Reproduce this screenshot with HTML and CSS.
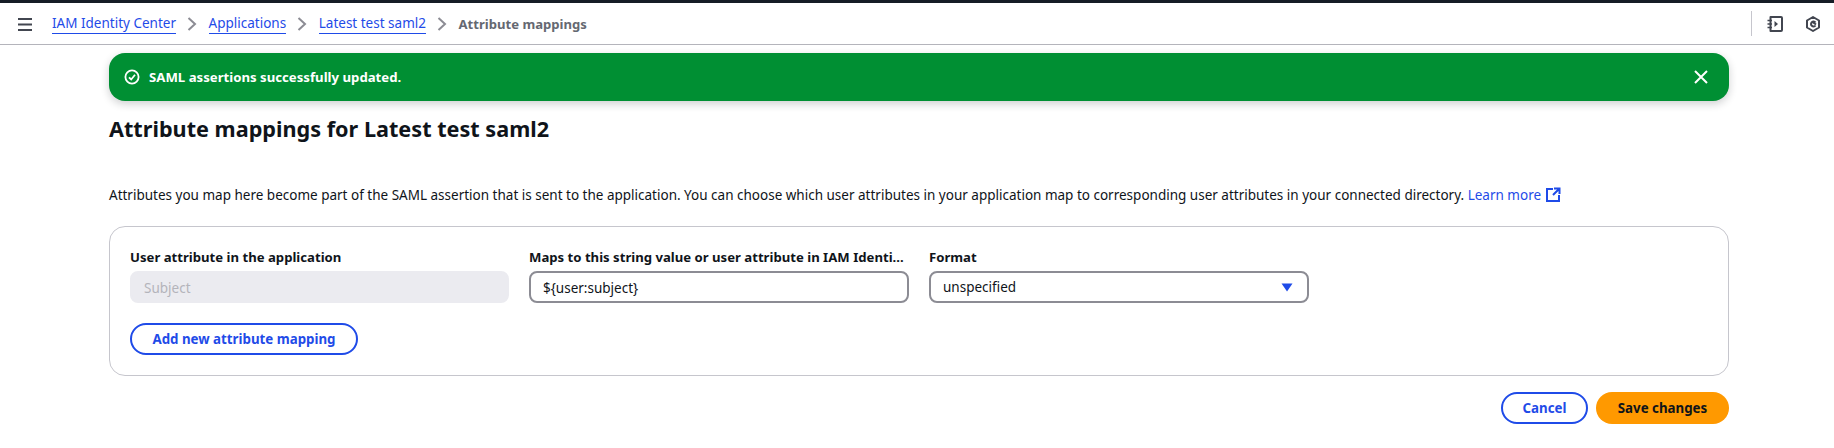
FILE: index.html
```html
<!DOCTYPE html>
<html lang="en">
<head>
<meta charset="utf-8">
<title>Attribute mappings</title>
<link rel="stylesheet" href="styles.css">
</head>
<body>
<header class="topbar">
  <div class="topbar-left">
    <svg class="menu-icon" width="16" height="16" viewBox="0 0 16 16"><path d="M1 3h14M1 8.500h14M1 14h14" fill="none" stroke="#424650" stroke-width="2"/></svg>
    <nav class="crumbs">
      <a class="crumb-link">IAM Identity Center</a>
      <svg class="chev" width="16" height="16" viewBox="0 0 16 16"><path d="M4.500 2l6.500 6-6.500 6" fill="none" stroke="#8c8c94" stroke-width="2"/></svg>
      <a class="crumb-link">Applications</a>
      <svg class="chev" width="16" height="16" viewBox="0 0 16 16"><path d="M4.500 2l6.500 6-6.500 6" fill="none" stroke="#8c8c94" stroke-width="2"/></svg>
      <a class="crumb-link">Latest test saml2</a>
      <svg class="chev" width="16" height="16" viewBox="0 0 16 16"><path d="M4.500 2l6.500 6-6.500 6" fill="none" stroke="#8c8c94" stroke-width="2"/></svg>
      <span class="crumb-current">Attribute mappings</span>
    </nav>
  </div>
  <div class="topbar-right">
    <svg class="tool-icon" width="16" height="16" viewBox="0 0 16 16" fill="none" stroke="#424650" stroke-width="2"><path d="M3.500 1h10.500a1 1 0 0 1 1 1v12a1 1 0 0 1-1 1H3.500z" stroke-linejoin="round"/><path d="M0.500 4.500h4.500M0.500 8h4.500M0.500 11.500h4.500" stroke-width="1.600"/><path d="M7.500 5l3.500 3-3.500 3z" fill="#424650" stroke="none"/></svg>
    <svg class="tool-icon" width="16" height="16" viewBox="0 0 16 16" fill="none" stroke="#424650" stroke-width="2"><path d="M8 1l6 3.500v7L8 15l-6-3.500v-7z" stroke-linejoin="round"/><path d="M10.500 6.500a2.500 2.500 0 1 0 0 3M7.500 6l3.500 2.500"/></svg>
  </div>
</header>
<main class="page">
  <div class="flash">
    <svg class="flash-icon" width="16" height="16" viewBox="0 0 16 16" fill="none" stroke="#fff" stroke-width="1.800"><circle cx="8" cy="8" r="6.600"/><path d="M5 8.300l2.200 2.200L11 5.800"/></svg>
    <span class="flash-text">SAML assertions successfully updated.</span>
    <svg class="flash-close" width="16" height="16" viewBox="0 0 16 16" fill="none" stroke="#fff" stroke-width="2"><path d="M2 2l12 12M14 2L2 14"/></svg>
  </div>
  <h1 class="title">Attribute mappings for Latest test saml2</h1>
  <p class="desc">Attributes you map here become part of the SAML assertion that is sent to the application. You can choose which user attributes in your application map to corresponding user attributes in your connected directory. <a class="learn">Learn more<svg class="ext" width="16" height="16" viewBox="0 0 16 16" fill="none" stroke="#1f4be8" stroke-width="2"><path d="M8 2H2v12h12V8M8 8l6-6M9 1.500h5.500V7"/></svg></a></p>
  <section class="card">
    <div class="row">
      <div class="field">
        <label class="label">User attribute in the application</label>
        <div class="input disabled">Subject</div>
      </div>
      <div class="field">
        <label class="label">Maps to this string value or user attribute in IAM Identi…</label>
        <div class="input">${user:subject}</div>
      </div>
      <div class="field">
        <label class="label">Format</label>
        <div class="input select">unspecified<svg class="caret" width="12" height="9" viewBox="0 0 12 9"><path d="M0.500 0.500h11L6 8.500z" fill="#1f4be8"/></svg></div>
      </div>
    </div>
    <button class="btn outline add">Add new attribute mapping</button>
  </section>
  <div class="actions">
    <button class="btn outline">Cancel</button>
    <button class="btn primary">Save changes</button>
  </div>
</main>
</body>
</html>
```
FILE: styles.css
```css
* { box-sizing: border-box; }
html, body { margin: 0; padding: 0; background: #fff; }
body { font-family: "Noto Sans", sans-serif; font-size: 13.5px; line-height: 20px; color: #0f141a; height: 448px; overflow: hidden; }
.topbar { height: 45px; border-top: 3px solid #161d26; border-bottom: 1px solid #b4b4bb; display: flex; align-items: center; justify-content: space-between; padding: 0 0 0 17px; }
.topbar-left { display: flex; align-items: center; padding-top: 1px; }
.menu-icon { display: block; }
.crumbs { display: flex; align-items: center; margin-left: 19px; }
.crumb-link { color: #1f4be8; font-size: 13.5px; border-bottom: 1px solid #1f4be8; line-height: 19px; height: 20px; }
.chev { margin: 0 8.600px 0 8px; }
.crumb-current { color: #656871; font-weight: 700; font-size: 13.1px; }
.topbar-right { display: flex; align-items: center; height: 25px; border-left: 1px solid #c6c6cd; padding-left: 15px; gap: 22px; width: 83px; flex: none; }
.tool-icon { display: block; flex: none; }
.page { padding: 8px 105px 0 109px; }
.flash { height: 48px; background: #008f33; border-radius: 16px; display: flex; align-items: center; padding: 0 20px 0 15px; color: #fff; box-shadow: 0 3px 8px rgba(15,20,26,.2); }
.flash-icon { flex: none; }
.flash-text { font-weight: 700; font-size: 13.2px; margin-left: 9px; flex: 1; }
.flash-close { flex: none; }
.title { margin: 13px 0 0; font-size: 21.650px; line-height: 30px; font-weight: 700; color: #0f141a; }
.desc { margin: 41px 0 0; font-size: 13.5px; line-height: 20px; white-space: nowrap; }
.learn { color: #1f4be8; }
.ext { vertical-align: -3px; margin-left: 4px; }
.card { margin-top: 21px; height: 150px; border: 1px solid #c6c6cd; border-radius: 16px; padding: 20px; }
.row { display: grid; grid-template-columns: 379px 380px 380px; column-gap: 20px; }
.field { min-width: 0; }
.label { display: block; font-size: 13.150px; font-weight: 700; line-height: 20px; margin-bottom: 4px; white-space: nowrap; }
.input { height: 32px; border: 2px solid #8c8c94; border-radius: 8px; padding: 1px 12px 0; font-size: 13.5px; background: #fff; display: flex; align-items: center; }
.input.disabled { background: #ebebf0; border-color: #ebebf0; color: #b4b4bb; }
.select { justify-content: space-between; padding: 0 14px 0 12px; }
.caret { display: block; }
.btn { font-family: inherit; font-size: 13.3px; font-weight: 700; line-height: 20px; height: 32px; border-radius: 20px; padding: 0 20px; cursor: pointer; }
.outline { background: #fff; border: 2px solid #1f4be8; color: #1f4be8; }
.add { margin-top: 20px; display: block; width: 228px; padding: 0; }
.actions { display: flex; justify-content: flex-end; gap: 8px; margin-top: 16px; }
.actions .outline { width: 87px; padding: 0; }
.primary { background: #ff9900; border: none; color: #0f141a; width: 133px; padding: 0; }
```
